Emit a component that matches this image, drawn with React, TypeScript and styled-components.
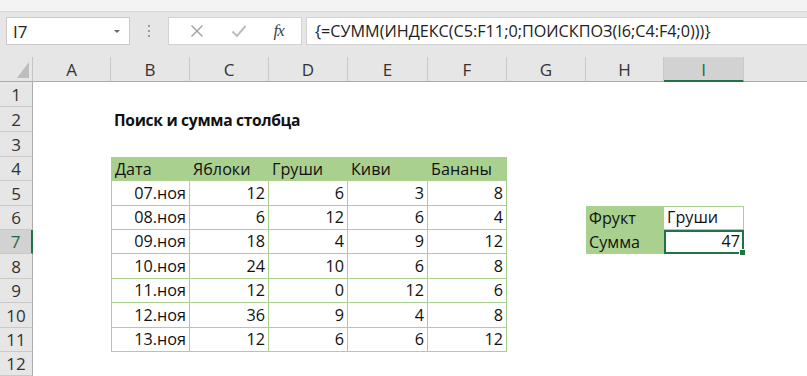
import React from 'react';
import styled, { createGlobalStyle, css } from 'styled-components';

const GlobalStyle = createGlobalStyle`
  html, body {
    margin: 0;
    padding: 0;
    background: #ffffff;
  }
  body {
    font-family: "Open Sans", "Liberation Sans", Arial, sans-serif;
    overflow: hidden;
    width: 807px;
    height: 376px;
  }
`;

const GREEN = '#a9d08e';
const DARK_GREEN = '#217346';

const COLS = [
  { key: 'A', w: 78 },
  { key: 'B', w: 79 },
  { key: 'C', w: 79 },
  { key: 'D', w: 79 },
  { key: 'E', w: 80 },
  { key: 'F', w: 79 },
  { key: 'G', w: 79 },
  { key: 'H', w: 78 },
  { key: 'I', w: 80 },
  { key: 'J', w: 80 },
];

const ROW_H = [25, 25, 25, 24, 25, 24, 24, 25, 24, 25, 24, 24];

type CellSpec = {
  text?: string;
  align?: 'left' | 'right';
  bold?: boolean;
  fill?: boolean;
  grid?: boolean;
  top?: boolean;
  left?: boolean;
  selected?: boolean;
};

// данные таблицы
const fruits = ['Яблоки', 'Груши', 'Киви', 'Бананы'];
const values = [
  ['07.ноя', 12, 6, 3, 8],
  ['08.ноя', 6, 12, 6, 4],
  ['09.ноя', 18, 4, 9, 12],
  ['10.ноя', 24, 10, 6, 8],
  ['11.ноя', 12, 0, 12, 6],
  ['12.ноя', 36, 9, 4, 8],
  ['13.ноя', 12, 6, 6, 12],
];

const cells: Record<string, CellSpec> = {};
cells['B2'] = { text: 'Поиск и сумма столбца', bold: true };
cells['B4'] = { text: 'Дата', fill: true, top: true, left: true };
fruits.forEach((f, i) => {
  cells['CDEF'[i] + '4'] = { text: f, fill: true, top: true };
});
values.forEach((row, r) => {
  row.forEach((v, c) => {
    cells['BCDEF'[c] + (r + 5)] = {
      text: String(v),
      align: 'right',
      grid: true,
      left: c === 0,
    };
  });
});
cells['H6'] = { text: 'Фрукт', fill: true };
cells['H7'] = { text: 'Сумма', fill: true };
cells['I6'] = { text: 'Груши', grid: true, top: true };
cells['I7'] = { text: '47', align: 'right', selected: true };

const Page = styled.div`
  width: 807px;
  height: 376px;
  display: flex;
  flex-direction: column;
  background: #e6e6e6;
  overflow: hidden;
`;

const RibbonEdge = styled.div`
  height: 11px;
  flex-shrink: 0;
  background: #f3f3f3;
  border-bottom: 1px solid #dadada;
`;

const FormulaBar = styled.div`
  height: 45px;
  flex-shrink: 0;
  display: flex;
  align-items: flex-start;
  padding: 5px 0 0 6px;
  box-sizing: border-box;
`;

const NameBox = styled.div`
  width: 124px;
  height: 28px;
  box-sizing: border-box;
  background: #fff;
  border: 1px solid #c9c9c9;
  display: flex;
  align-items: center;
  justify-content: space-between;
  padding: 0 9px 0 6px;
  font-size: 17px;
  color: #222;
`;

const Caret = styled.span`
  width: 0;
  height: 0;
  border-left: 3px solid transparent;
  border-right: 3px solid transparent;
  border-top: 3px solid #666;
`;

const Grip = styled.div`
  width: 38px;
  height: 28px;
  display: flex;
  flex-direction: column;
  align-items: center;
  justify-content: center;
  gap: 3px;
`;

const GripDot = styled.span`
  width: 2px;
  height: 2px;
  background: #9a9a9a;
`;

const ButtonBox = styled.div`
  width: 134px;
  height: 28px;
  box-sizing: border-box;
  background: #fff;
  border: 1px solid #d3d3d3;
  display: flex;
  align-items: center;
  justify-content: space-around;
  padding: 0 4px 0 8px;
`;

const Fx = styled.span`
  font-family: "Liberation Serif", "Times New Roman", serif;
  font-style: italic;
  font-size: 17px;
  color: #444;
  letter-spacing: -1px;
`;

const FormulaInput = styled.div`
  flex: 1;
  height: 28px;
  margin-left: 4px;
  box-sizing: border-box;
  background: #fff;
  border: 1px solid #d3d3d3;
  border-right: none;
  display: flex;
  align-items: center;
  padding-left: 8px;
  font-size: 16.2px;
  color: #222;
  white-space: nowrap;
`;

const Sheet = styled.div`
  display: flex;
  flex-direction: column;
  background: #fff;
  flex: 1;
`;

const Row = styled.div`
  display: flex;
  flex-shrink: 0;
`;

const HeaderBase = css`
  box-sizing: border-box;
  display: flex;
  align-items: center;
  justify-content: center;
  font-size: 17px;
  color: #333;
  flex-shrink: 0;
`;

const Corner = styled.div`
  ${HeaderBase};
  width: 33px;
  height: 25px;
  background: #e6e6e6;
  border-right: 1px solid #c4c4c4;
  border-bottom: 1px solid #ababab;
  position: relative;
`;

const ColHead = styled.div<{ $w: number; $active?: boolean }>`
  ${HeaderBase};
  width: ${(p) => p.$w}px;
  height: 25px;
  background: ${(p) => (p.$active ? '#d2d2d2' : '#e6e6e6')};
  border-right: 1px solid #c9c9c9;
  border-bottom: ${(p) => (p.$active ? `2px solid ${DARK_GREEN}` : '1px solid #ababab')};
  color: ${(p) => (p.$active ? '#1e6b40' : '#333')};
  padding-top: 1px;
`;

const RowHead = styled.div<{ $h: number; $active?: boolean }>`
  ${HeaderBase};
  width: 33px;
  height: ${(p) => p.$h}px;
  background: ${(p) => (p.$active ? '#d2d2d2' : '#e6e6e6')};
  border-bottom: 1px solid #c9c9c9;
  border-right: ${(p) => (p.$active ? `2px solid ${DARK_GREEN}` : '1px solid #ababab')};
  color: ${(p) => (p.$active ? '#1e6b40' : '#333')};
`;

const Cell = styled.div<{
  $w: number;
  $h: number;
  $spec: CellSpec;
}>`
  box-sizing: border-box;
  width: ${(p) => p.$w}px;
  height: ${(p) => p.$h}px;
  flex-shrink: 0;
  display: flex;
  align-items: flex-end;
  justify-content: ${(p) => (p.$spec.align === 'right' ? 'flex-end' : 'flex-start')};
  padding: 0 3px 1px 3px;
  font-size: ${(p) => (p.$spec.bold ? 15.6 : 16.2)}px;
  line-height: 22px;
  color: #111;
  white-space: nowrap;
  position: relative;
  font-weight: ${(p) => (p.$spec.bold ? 700 : 400)};
  letter-spacing: ${(p) => (p.$spec.bold ? '-0.3px' : '0')};
  background: ${(p) => (p.$spec.fill ? GREEN : 'transparent')};
  ${(p) =>
    p.$spec.grid &&
    css`
      border-right: 1px solid ${GREEN};
      border-bottom: 1px solid ${GREEN};
    `}
  ${(p) => p.$spec.left && `border-left: 1px solid ${GREEN};`}
  ${(p) => p.$spec.top && p.$spec.grid && `border-top: 1px solid ${GREEN};`}
  ${(p) =>
    p.$spec.selected &&
    css`
      border: 2px solid ${DARK_GREEN};
      padding: 0 2px 0 2px;
    `}
`;

const FillHandle = styled.span`
  position: absolute;
  right: -4px;
  bottom: -4px;
  width: 5px;
  height: 5px;
  background: ${DARK_GREEN};
  border: 1px solid #fff;
`;

const CrossIcon = () => (
  <svg width="14" height="14" viewBox="0 0 14 14">
    <path d="M1.5 1.5 L12.5 12.5 M12.5 1.5 L1.5 12.5" stroke="#a6a6a6" strokeWidth="1.5" fill="none" />
  </svg>
);

const CheckIcon = () => (
  <svg width="16" height="14" viewBox="0 0 16 14">
    <path d="M1.5 7.5 L6 12 L14.5 2" stroke="#bdbdbd" strokeWidth="2" fill="none" />
  </svg>
);

const CornerTriangle = () => (
  <svg width="12" height="16" viewBox="0 0 12 16" style={{ position: 'absolute', right: 3, bottom: 3 }}>
    <polygon points="12,0 12,16 0,16" fill="#bdbdbd" />
  </svg>
);

const App = () => {
  return (
    <Page>
      <GlobalStyle />
      <RibbonEdge />
      <FormulaBar>
        <NameBox>
          <span>I7</span>
          <Caret />
        </NameBox>
        <Grip>
          <GripDot />
          <GripDot />
          <GripDot />
        </Grip>
        <ButtonBox>
          <CrossIcon />
          <CheckIcon />
          <Fx>fx</Fx>
        </ButtonBox>
        <FormulaInput>{'{=СУММ(ИНДЕКС(C5:F11;0;ПОИСКПОЗ(I6;C4:F4;0)))}'}</FormulaInput>
      </FormulaBar>
      <Sheet>
        <Row>
          <Corner>
            <CornerTriangle />
          </Corner>
          {COLS.map((c) => (
            <ColHead key={c.key} $w={c.w} $active={c.key === 'I'}>
              {c.key === 'J' ? '' : c.key}
            </ColHead>
          ))}
        </Row>
        {ROW_H.map((h, i) => {
          const r = i + 1;
          return (
            <Row key={r}>
              <RowHead $h={h} $active={r === 7}>
                {r}
              </RowHead>
              {COLS.map((c) => {
                const spec = cells[c.key + r] || {};
                return (
                  <Cell key={c.key} $w={c.w} $h={h} $spec={spec}>
                    {spec.text}
                    {spec.selected && <FillHandle />}
                  </Cell>
                );
              })}
            </Row>
          );
        })}
      </Sheet>
    </Page>
  );
};

export default App;
